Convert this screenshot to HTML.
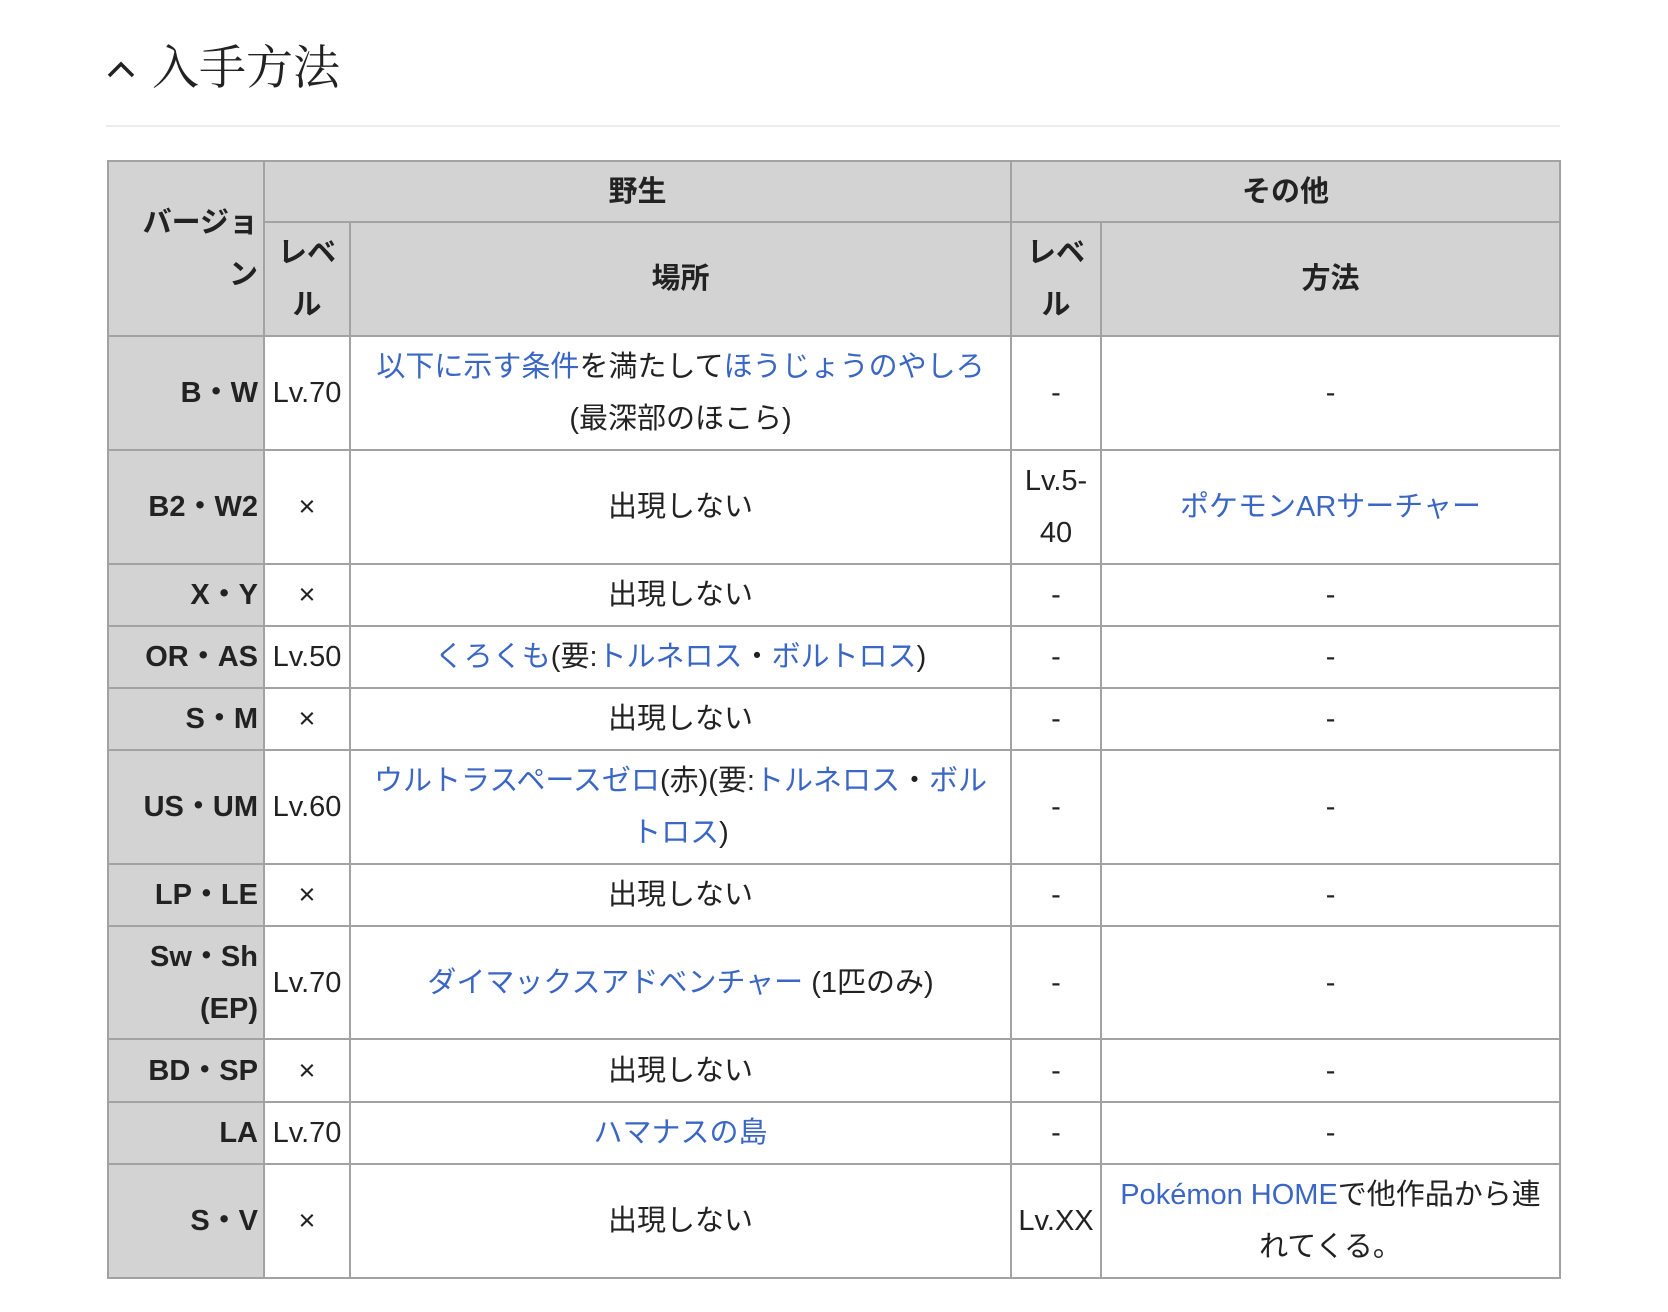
<!DOCTYPE html>
<html><head><meta charset="utf-8"><style>
body{margin:0;background:#fff;font-family:"Liberation Sans","Noto Sans CJK JP",sans-serif;color:#222;}
h2{position:absolute;left:106px;top:34px;margin:0;font-weight:normal;font-size:47px;line-height:70px;font-family:"Liberation Serif","Noto Serif CJK SC",serif;color:#222;}
h2 svg{vertical-align:middle;margin-right:16px;position:relative;top:-4px}
.hr{position:absolute;left:106px;top:125px;width:1454px;height:2px;background:#eaecf0}
table{position:absolute;left:107px;top:160px;border-collapse:collapse;table-layout:fixed;width:1452px;font-size:29px;line-height:52px}
td,th{border:2px solid #a2a2a2;text-align:center;vertical-align:middle;padding:0 5px;overflow:hidden}
th{background:#d3d3d3;font-weight:bold}
th.v{text-align:right}
a{color:#3a66c4;text-decoration:none}
</style></head><body>
<h2><svg width="30" height="20" viewBox="0 0 30 20"><path d="M3 17 L15 5 L27 17" fill="none" stroke="#222" stroke-width="3.5"/></svg>入手方法</h2>
<div class="hr"></div>
<table>
<colgroup><col style="width:156px"><col style="width:86px"><col style="width:661px"><col style="width:90px"><col style="width:459px"></colgroup>
<tr style="height:61px"><th rowspan="2" class="v">バージョン</th><th colspan="2">野生</th><th colspan="2">その他</th></tr>
<tr style="height:114px"><th>レベル</th><th>場所</th><th>レベル</th><th>方法</th></tr>
<tr style="height:114px"><th class="v">B・W</th><td>Lv.70</td><td><a>以下に示す条件</a>を満たして<a>ほうじょうのやしろ</a><br>(最深部のほこら)</td><td>-</td><td>-</td></tr>
<tr style="height:114px"><th class="v">B2・W2</th><td>×</td><td>出現しない</td><td>Lv.5-40</td><td><a>ポケモンARサーチャー</a></td></tr>
<tr style="height:62px"><th class="v">X・Y</th><td>×</td><td>出現しない</td><td>-</td><td>-</td></tr>
<tr style="height:62px"><th class="v">OR・AS</th><td>Lv.50</td><td><a>くろくも</a>(要:<a>トルネロス</a>・<a>ボルトロス</a>)</td><td>-</td><td>-</td></tr>
<tr style="height:62px"><th class="v">S・M</th><td>×</td><td>出現しない</td><td>-</td><td>-</td></tr>
<tr style="height:114px"><th class="v">US・UM</th><td>Lv.60</td><td><a>ウルトラスペースゼロ</a>(赤)(要:<a>トルネロス</a>・<a>ボル</a><br><a>トロス</a>)</td><td>-</td><td>-</td></tr>
<tr style="height:62px"><th class="v">LP・LE</th><td>×</td><td>出現しない</td><td>-</td><td>-</td></tr>
<tr style="height:113px"><th class="v">Sw・Sh (EP)</th><td>Lv.70</td><td><a>ダイマックスアドベンチャー</a> (1匹のみ)</td><td>-</td><td>-</td></tr>
<tr style="height:63px"><th class="v">BD・SP</th><td>×</td><td>出現しない</td><td>-</td><td>-</td></tr>
<tr style="height:62px"><th class="v">LA</th><td>Lv.70</td><td><a>ハマナスの島</a></td><td>-</td><td>-</td></tr>
<tr style="height:114px"><th class="v">S・V</th><td>×</td><td>出現しない</td><td>Lv.XX</td><td><a>Pokémon HOME</a>で他作品から連れてくる。</td></tr>
</table>
</body></html>
